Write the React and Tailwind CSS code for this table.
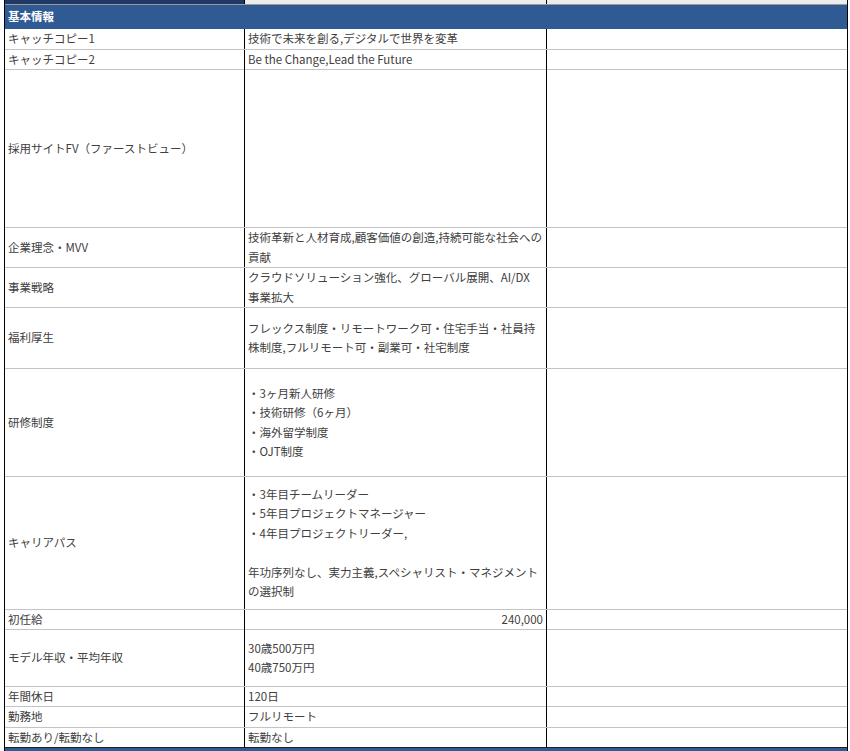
import React from "react";

const rows = [
  { label: "キャッチコピー1", h: "h-[21px]", value: ["技術で未来を創る,デジタルで世界を変革"] },
  { label: "キャッチコピー2", h: "h-[20px]", value: ["Be the Change,Lead the Future"] },
  { label: "採用サイトFV（ファーストビュー）", h: "h-[158px]", value: [] },
  { label: "企業理念・MVV", h: "h-[40px]", value: ["技術革新と人材育成,顧客価値の創造,持続可能な社会への", "貢献"] },
  { label: "事業戦略", h: "h-[40px]", value: ["クラウドソリューション強化、グローバル展開、AI/DX", "事業拡大"] },
  { label: "福利厚生", h: "h-[61px]", value: ["フレックス制度・リモートワーク可・住宅手当・社員持", "株制度,フルリモート可・副業可・社宅制度"] },
  { label: "研修制度", h: "h-[108px]", value: ["・3ヶ月新人研修", "・技術研修（6ヶ月）", "・海外留学制度", "・OJT制度"] },
  {
    label: "キャリアパス",
    h: "h-[133px]",
    value: ["・3年目チームリーダー", "・5年目プロジェクトマネージャー", "・4年目プロジェクトリーダー,", "", "年功序列なし、実力主義,スペシャリスト・マネジメント", "の選択制"],
  },
  { label: "初任給", h: "h-[20px]", value: ["240,000"], right: true },
  { label: "モデル年収・平均年収", h: "h-[57px]", value: ["30歳500万円", "40歳750万円"] },
  { label: "年間休日", h: "h-[20px]", value: ["120日"] },
  { label: "勤務地", h: "h-[21px]", value: ["フルリモート"] },
  { label: "転勤あり/転勤なし", h: "h-[20px]", value: ["転勤なし"], last: true },
];

const Row = ({ row }) => (
  <div
    className={`grid grid-cols-[240px_302px_300px] box-border ${row.h} border-b ${
      row.last ? "border-[#1f1f1f]" : "border-[#c4c4c4]"
    }`}
  >
    <div className="flex items-center px-[3px] border-r border-black whitespace-nowrap">{row.label}</div>
    <div
      className={`flex flex-col justify-center px-[3px] border-r border-black leading-[19.5px] ${
        row.right ? "items-end" : "items-start"
      }`}
    >
      {row.value.map((line, i) => (
        <div key={i} className="whitespace-nowrap h-[19.5px]">
          {line}
        </div>
      ))}
    </div>
    <div />
  </div>
);

export default function App() {
  return (
    <div
      className="w-[850px] h-[751px] bg-white overflow-hidden text-[11.5px] text-[#404040]"
      style={{ fontFamily: '"Noto Sans CJK JP", "Liberation Sans", sans-serif' }}
    >
      <div className="ml-[4px] w-[844px] flex flex-col border-l border-r border-black">
        {/* top strip from the row above */}
        <div className="grid grid-cols-[240px_302px_300px] h-[5px] box-border border-b border-[#9a9a9a] bg-[#ececec]">
          <div className="bg-[#203864] border-r border-black" />
          <div className="border-r border-black" />
          <div />
        </div>
        <div className="h-[24px] bg-[#2f5a94] flex items-center px-[3px] text-white font-bold">
          基本情報
        </div>
        {rows.map((row) => (
          <Row key={row.label} row={row} />
        ))}
        <div className="h-[8px] bg-[#2f5a94]" />
      </div>
    </div>
  );
}
